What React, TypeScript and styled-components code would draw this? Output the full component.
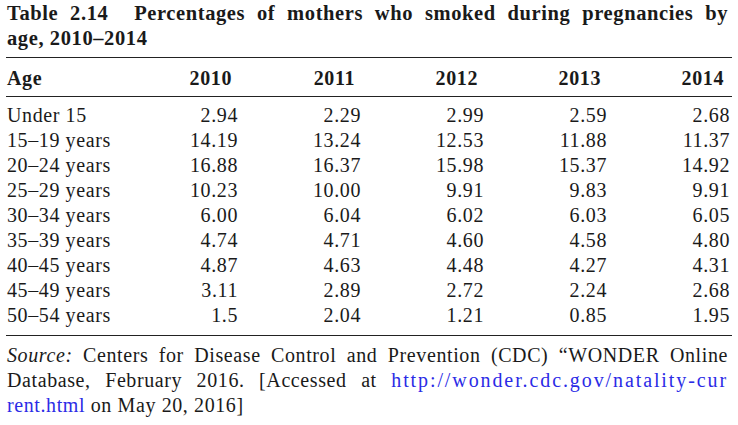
import styled, { createGlobalStyle } from "styled-components";

const GlobalStyle = createGlobalStyle`
	body {
		margin: 0;
		background: #ffffff;
		color: #1a1a1a;
		font-family: "Liberation Serif", "DejaVu Serif", serif;
	}
`;

const Page = styled.div`
	width: 738px;
	height: 425px;
	box-sizing: border-box;
	padding: 1px 6px 0 6px;
	font-size: 20px;
	line-height: 25px;
	letter-spacing: 0.6px;
	overflow: hidden;
`;

const Caption = styled.div`
	font-weight: 700;
	font-size: 20.5px;
	padding: 0 4px 0 1px;
`;

const JustLine = styled.span`
	display: block;
	text-align: justify;
	text-align-last: justify;
`;

const PlainLine = styled.span`
	display: block;
	text-align: left;
`;

const Label = styled.span`
	margin-right: 14px;
`;

const Grid = styled.div`
	display: grid;
	grid-template-columns: 1fr repeat(5, 123px);
`;

const HeadRow = styled(Grid)`
	margin-top: 6px;
	border-top: 1.5px solid #222;
	border-bottom: 1.5px solid #222;
	padding: 8px 0 5px;
	font-weight: 700;
`;

const Body = styled(Grid)`
	padding: 6px 0 7px;
	border-bottom: 1.5px solid #222;
`;

const Cell = styled.div<{ $num?: boolean; $head?: boolean }>`
	padding-left: 1px;
	text-align: ${(p) => (p.$num ? "right" : "left")};
	padding-right: ${(p) => (p.$num ? (p.$head ? "8px" : "2px") : "0")};
	white-space: nowrap;
`;

const Source = styled.div`
	margin-top: 7px;
	padding: 0 4px 0 1px;
`;

const Link = styled.span<{ $wide?: boolean }>`
	color: #2b2be6;
	letter-spacing: ${(p) => (p.$wide ? "1.9px" : "0.6px")};
`;

const years = ["2010", "2011", "2012", "2013", "2014"];

const rows: [string, string[]][] = [
	["Under 15", ["2.94", "2.29", "2.99", "2.59", "2.68"]],
	["15–19 years", ["14.19", "13.24", "12.53", "11.88", "11.37"]],
	["20–24 years", ["16.88", "16.37", "15.98", "15.37", "14.92"]],
	["25–29 years", ["10.23", "10.00", "9.91", "9.83", "9.91"]],
	["30–34 years", ["6.00", "6.04", "6.02", "6.03", "6.05"]],
	["35–39 years", ["4.74", "4.71", "4.60", "4.58", "4.80"]],
	["40–45 years", ["4.87", "4.63", "4.48", "4.27", "4.31"]],
	["45–49 years", ["3.11", "2.89", "2.72", "2.24", "2.68"]],
	["50–54 years", ["1.5", "2.04", "1.21", "0.85", "1.95"]],
];

export default function App() {
	return (
		<Page>
			<GlobalStyle />
			<Caption>
				<JustLine>
					<Label>Table 2.14</Label> Percentages of mothers who smoked during
					pregnancies by
				</JustLine>
				<PlainLine>age, 2010–2014</PlainLine>
			</Caption>
			<HeadRow>
				<Cell>Age</Cell>
				{years.map((y) => (
					<Cell key={y} $num $head>
						{y}
					</Cell>
				))}
			</HeadRow>
			<Body>
				{rows.map(([age, vals]) => [
					<Cell key={age}>{age}</Cell>,
					...vals.map((v, i) => (
						<Cell key={age + i} $num>
							{v}
						</Cell>
					)),
				])}
			</Body>
			<Source>
				<JustLine>
					<i>Source:</i> Centers for Disease Control and Prevention (CDC)
					“WONDER Online
				</JustLine>
				<JustLine>
					Database, February 2016. [Accessed at{" "}
					<Link $wide>http://wonder.cdc.gov/natality-cur</Link>
				</JustLine>
				<PlainLine>
					<Link>rent.html</Link> on May 20, 2016]
				</PlainLine>
			</Source>
		</Page>
	);
}
